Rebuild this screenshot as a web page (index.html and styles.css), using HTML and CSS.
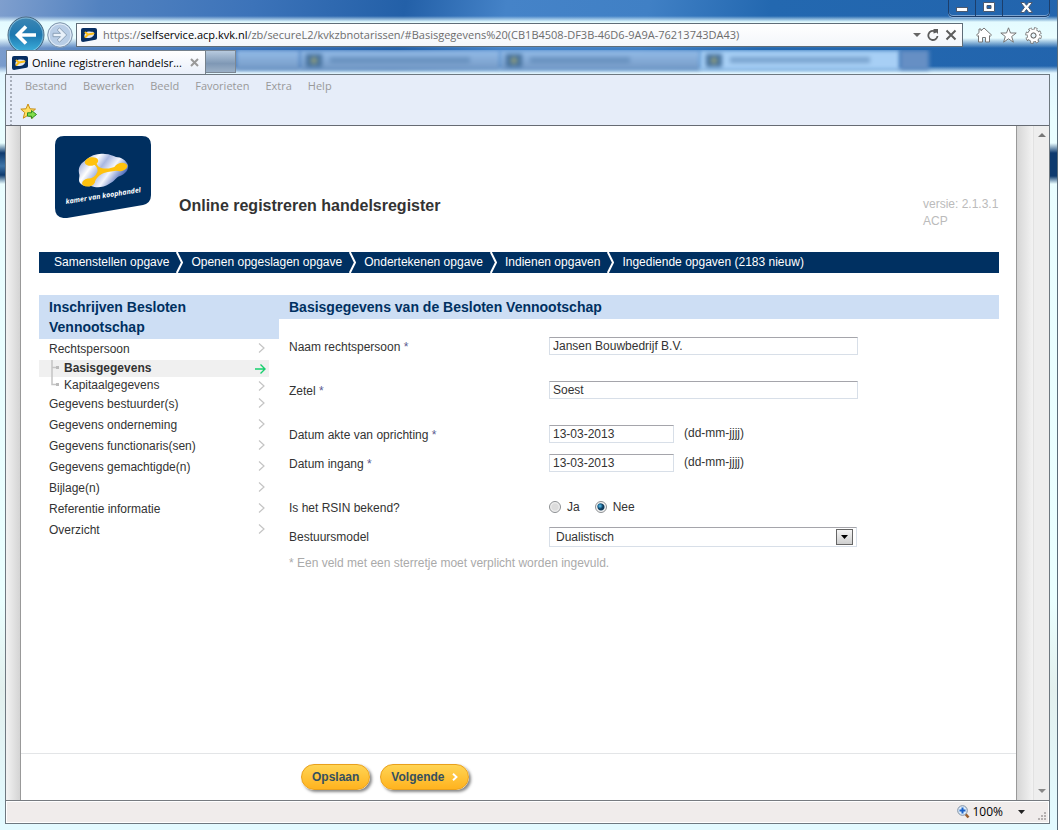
FILE: index.html
```html
<!DOCTYPE html>
<html lang="nl">
<head>
<meta charset="utf-8">
<title>Online registreren handelsregister</title>
<link rel="stylesheet" href="styles.css">
</head>
<body>
<svg class="defs" aria-hidden="true">
  <defs>
    <linearGradient id="blob" x1="0" y1="0" x2="1" y2="0.5">
      <stop offset="0" stop-color="#6f85c8"/><stop offset="0.35" stop-color="#fff"/><stop offset="0.52" stop-color="#a9b8e2"/><stop offset="0.72" stop-color="#f4f6fd"/><stop offset="1" stop-color="#3e5fb4"/>
    </linearGradient>
    <linearGradient id="backfill" x1="0" y1="0" x2="0" y2="1">
      <stop offset="0" stop-color="#3e87b4"/><stop offset="0.5" stop-color="#1d78b0"/><stop offset="1" stop-color="#3fb4e0"/>
    </linearGradient>
    <symbol id="favicon" viewBox="0 0 16 14">
      <path d="M2 0h12q2 0 2 2v8q0 1.500-1.500 1.800L2 14q-2 0-2-2V2q0-2 2-2z" fill="#062e62"/>
      <path d="M3.500 8.500C3 5 6 3 9 3.500s4 0 4 2.500-3 4-6 4-3-.5-3.500-1.500z" fill="#dfe6f6"/>
      <path d="M4.500 4.500 7 6.500 4.500 9M7 6.500l5.500-1" stroke="#fbbd17" stroke-width="2" fill="none" stroke-linecap="round"/>
    </symbol>
    <symbol id="chev" viewBox="0 0 8 10"><path d="M1 .5 6 5 1 9.500" fill="none" stroke="#c4c4c4" stroke-width="1.200"/></symbol>
    <symbol id="step" viewBox="0 0 7 21"><path d="M.8 0 6 10.500.8 21" fill="none" stroke="#fff" stroke-width="2"/></symbol>
  </defs>
</svg>
<div class="window">
  <header class="titlebar">
    <div class="controls">
      <button aria-label="Minimaliseren"><svg width="12" height="5"><rect x=".5" y=".5" width="11" height="4" fill="#fff" stroke="#4c5a70"/></svg></button>
      <button aria-label="Maximaliseren"><svg width="12" height="10"><path d="M.5.500h11v9H.500zM4 3.500v3h4v-3z" fill="#fff" fill-rule="evenodd" stroke="#4c5a70"/></svg></button>
      <button class="close" aria-label="Sluiten"><svg width="13" height="11" viewBox="0 0 13 11"><path d="M.7.500h3.600l2.200 2.800L8.700.500h3.600L8.600 5.300l3.900 5.200H8.800L6.500 7.400l-2.300 3.100H.500l3.900-5.200z" fill="#fff" stroke="#4c5a70"/></svg></button>
    </div>
  </header>

  <div class="navrow">
    <button class="back" aria-label="Vorige"><svg width="38" height="38" viewBox="0 0 38 38"><circle cx="19" cy="19" r="18" fill="url(#backfill)" stroke="#49657d"/><circle cx="19" cy="19" r="17" fill="none" stroke="#b3dcee" stroke-opacity=".6"/><path d="M29 19H11M19 10.500 10.500 19l8.500 8.500" fill="none" stroke="#fff" stroke-width="3.600"/></svg></button>
    <button class="forward" aria-label="Volgende pagina"><svg width="26" height="26" viewBox="0 0 26 26"><circle cx="13" cy="13" r="12.300" fill="#b8cde6" stroke="#8095aa"/><circle cx="13" cy="13" r="11" fill="none" stroke="#e4eef8"/><path d="M6 11.300h7.500L10.200 8l2.300-2.200L19.700 13l-7.200 7.200-2.300-2.200 3.300-3.300H6z" fill="#e9f1fa" stroke="#8ba0b7"/></svg></button>
    <div class="address">
      <svg width="16" height="14"><use href="#favicon"/></svg>
      <div class="url" role="textbox" aria-label="Adres" contenteditable="true" spellcheck="false">https://<b>selfservice.acp.kvk.nl</b>/zb/secureL2/kvkzbnotarissen/#Basisgegevens%20(CB1B4508-DF3B-46D6-9A9A-76213743DA43)</div>
      <button aria-label="Adreslijst"><svg width="8" height="4"><path d="M0 0h8L4 4z" fill="#666"/></svg></button>
      <button aria-label="Vernieuwen"><svg width="12" height="12" viewBox="0 0 12 12"><path d="M10.500 7A4.600 4.600 0 1 1 8 2.300" fill="none" stroke="#5c5c5c" stroke-width="1.800"/><path d="M6.500 0H11v5L9.500 3.500 6.500 4.500z" fill="#5c5c5c"/></svg></button>
      <button aria-label="Stoppen"><svg width="12" height="12" viewBox="0 0 12 12"><path d="m1.500 1.500 9 9m0-9-9 9" stroke="#5c5c5c" stroke-width="2"/></svg></button>
    </div>
    <div class="tools">
      <button aria-label="Startpagina"><svg width="16" height="16" viewBox="0 0 16 16"><path d="M8 1 15.500 8l-1.300 1.200-.7-.5V15H9.500v-4.500h-3V15h-4V8.700l-.7.500L.5 8 3 5.700V2h2v1.800z" fill="#fff" stroke="#777"/></svg></button>
      <button aria-label="Favorieten"><svg width="17" height="16" viewBox="0 0 17 16"><path d="m8.500.8 2 5.200h5.700l-4.500 3.500 1.700 5.700-4.900-3.400-4.900 3.400 1.700-5.700L.8 6h5.700z" fill="#fff" stroke="#777"/></svg></button>
      <button aria-label="Extra"><svg width="17" height="17" viewBox="0 0 17 17"><circle cx="8.500" cy="8.500" r="6.500" fill="none" stroke="#777" stroke-width="3.600" stroke-dasharray="3.100 2" stroke-dashoffset=".3"/><circle cx="8.500" cy="8.500" r="4.500" fill="none" stroke="#777" stroke-width="4.500"/><circle cx="8.500" cy="8.500" r="6.300" fill="none" stroke="#fff" stroke-width="2.400" stroke-dasharray="1.800 3.150" stroke-dashoffset="-.4"/><circle cx="8.500" cy="8.500" r="4.400" fill="none" stroke="#fff" stroke-width="3"/><circle cx="8.500" cy="8.500" r="2.400" fill="#e7f6fd" stroke="#777"/></svg></button>
    </div>
  </div>

  <div class="tabs">
    <div class="tab">
      <svg width="16" height="14"><use href="#favicon"/></svg>
      <span>Online registreren handelsr...</span>
      <button aria-label="Tabblad sluiten"><svg width="9" height="9" viewBox="0 0 9 9"><path d="m1 1 7 7m0-7L1 8" stroke="#999" stroke-width="2"/></svg></button>
    </div>
    <button class="newtab" aria-label="Nieuw tabblad"></button>
    <div class="ghosts" aria-hidden="true">
      <i class="ghost first"></i>
      <i class="ghost"><em></em><u></u></i>
      <i class="ghost"><em></em><u class="short"></u></i>
      <i class="ghost lit"><em></em><u></u></i>
      <i class="ghost last"></i>
    </div>
  </div>

  <div class="client">
    <div class="toolbar">
      <nav class="menu">
        <button>Bestand</button><button>Bewerken</button><button>Beeld</button><button>Favorieten</button><button>Extra</button><button>Help</button>
      </nav>
      <button class="addfav" aria-label="Toevoegen aan favorieten"><svg width="18" height="17" viewBox="0 0 18 17"><path d="m8 1 2 4.800 5.500.3-4.200 3.500 1.400 5.600L8 12.200l-4.700 3 1.400-5.600L.8 6.100 6 5.800z" fill="#ffdf62" stroke="#c98e16"/><path d="M7.500 9.800h4V7.500l5 4-5 4v-2.300h-4z" fill="#82dd4c" stroke="#2e8d23"/></svg></button>
    </div>

    <div class="viewport">
      <div class="page">
        <div class="brand">
          <svg class="logo" width="96" height="82" viewBox="0 0 96 82" role="img" aria-label="kamer van koophandel">
            <path d="M9 0h78q9 0 9 9v50q0 8-8 10L12 82Q0 83 0 72V9Q0 0 9 0z" fill="#002f60"/>
            <path d="M24 37c-1-6 2-10 7-13 5-5 12-7 19-6 5 0 8 2 11 3 5 0 10 3 12 8 1 5-3 9-8 11-4 1-5 5-11 8-6 4-13 4-18 2-7 1-12-2-12-6 0-3 1-4 0-7z" fill="url(#blob)"/>
            <g fill="#ffc20e">
              <ellipse cx="36.500" cy="25.500" rx="6.800" ry="4.200" transform="rotate(-10 36.500 25.500)"/>
              <ellipse cx="66" cy="31" rx="6.500" ry="4" transform="rotate(-14 66 31)"/>
              <ellipse cx="33.500" cy="46.500" rx="6.500" ry="4" transform="rotate(-10 33.500 46.500)"/>
              <path d="M41 25c1 5 3 7 8 7.500 5 .3 9-.5 13-3l1 5c-5 1-9 .8-14 2.500-5 2-8 5-9.500 10L34 43c6-2 7-4 8.500-7.500.5-3-1-5-3.500-7z"/>
            </g>
            <text class="logotext" x="11" y="68" transform="rotate(-9 11 68)">kamer van koophandel</text>
          </svg>
          <h1>Online registreren handelsregister</h1>
          <p class="version">versie: 2.1.3.1<br>ACP</p>
        </div>

        <nav class="steps">
          <a href="#">Samenstellen opgave</a><svg width="7" height="21"><use href="#step"/></svg>
          <a href="#">Openen opgeslagen opgave</a><svg width="7" height="21"><use href="#step"/></svg>
          <a href="#">Ondertekenen opgave</a><svg width="7" height="21"><use href="#step"/></svg>
          <a href="#">Indienen opgaven</a><svg width="7" height="21"><use href="#step"/></svg>
          <a href="#">Ingediende opgaven (2183 nieuw)</a>
        </nav>

        <div class="columns">
          <aside class="side">
            <h2>Inschrijven Besloten Vennootschap</h2>
            <ul>
              <li><a href="#">Rechtspersoon<svg width="8" height="10"><use href="#chev"/></svg></a></li>
              <li class="sub active"><svg class="branch" width="9" height="17"><path d="M1 0v17M1 7.500h4" stroke="#c4c4c4" fill="none" stroke-width="1.500"/><rect x="5" y="6" width="3" height="3" fill="#bbb"/></svg><a href="#">Basisgegevens<svg width="11" height="10" viewBox="0 0 11 10"><path d="M0 5h10M5.500.5 10 5l-4.500 4.500" fill="none" stroke="#16cf6d" stroke-width="1.400"/></svg></a></li>
              <li class="sub"><svg class="branch" width="9" height="17"><path d="M1 0v7.500h4" stroke="#c4c4c4" fill="none" stroke-width="1.500"/><rect x="5" y="6" width="3" height="3" fill="#bbb"/></svg><a href="#">Kapitaalgegevens<svg width="8" height="10"><use href="#chev"/></svg></a></li>
              <li><a href="#">Gegevens bestuurder(s)<svg width="8" height="10"><use href="#chev"/></svg></a></li>
              <li><a href="#">Gegevens onderneming<svg width="8" height="10"><use href="#chev"/></svg></a></li>
              <li><a href="#">Gegevens functionaris(sen)<svg width="8" height="10"><use href="#chev"/></svg></a></li>
              <li><a href="#">Gegevens gemachtigde(n)<svg width="8" height="10"><use href="#chev"/></svg></a></li>
              <li><a href="#">Bijlage(n)<svg width="8" height="10"><use href="#chev"/></svg></a></li>
              <li><a href="#">Referentie informatie<svg width="8" height="10"><use href="#chev"/></svg></a></li>
              <li><a href="#">Overzicht<svg width="8" height="10"><use href="#chev"/></svg></a></li>
            </ul>
          </aside>

          <main class="content">
            <h2>Basisgegevens van de Besloten Vennootschap</h2>
            <form id="basis" class="form">
              <div class="row spaced"><label for="naam">Naam rechtspersoon <span class="star">*</span></label><input class="text" id="naam" type="text" value="Jansen Bouwbedrijf B.V."></div>
              <div class="row spaced"><label for="zetel">Zetel <span class="star">*</span></label><input class="text" id="zetel" type="text" value="Soest"></div>
              <div class="row"><label for="akte">Datum akte van oprichting <span class="star">*</span></label><input class="text date" id="akte" type="text" value="13-03-2013"><span class="hint">(dd-mm-jjjj)</span></div>
              <div class="row spaced"><label for="ingang">Datum ingang <span class="star">*</span></label><input class="text date" id="ingang" type="text" value="13-03-2013"><span class="hint">(dd-mm-jjjj)</span></div>
              <div class="row" role="radiogroup" aria-labelledby="rsin"><span class="caption" id="rsin">Is het RSIN bekend?</span>
                <span class="option"><input type="radio" name="rsin" id="ja"><label for="ja">Ja</label></span>
                <span class="option"><input type="radio" name="rsin" id="nee" checked><label for="nee">Nee</label></span>
              </div>
              <div class="row"><label for="model">Bestuursmodel</label>
                <span class="select"><select id="model"><option>Dualistisch</option></select><span class="drop"><svg width="7" height="4"><path d="M0 0h7L3.500 4z"/></svg></span></span>
              </div>
              <p class="note">* Een veld met een sterretje moet verplicht worden ingevuld.</p>
            </form>
          </main>
        </div>

        <footer class="actions">
          <button form="basis" type="button">Opslaan</button>
          <button form="basis" type="button">Volgende<svg width="6" height="8" viewBox="0 0 6 8"><path d="m1 .7 3.500 3.300L1 7.300" fill="none" stroke="#fff" stroke-width="1.900"/></svg></button>
        </footer>
      </div>
      <div class="scrollbar" aria-hidden="true">
        <svg width="8" height="4"><path d="M0 4h8L4 0z" fill="#777"/></svg>
        <svg width="8" height="4"><path d="M0 0h8L4 4z" fill="#888"/></svg>
      </div>
    </div>

    <div class="status">
      <button class="zoom"><svg width="13" height="14" viewBox="0 0 13 14"><path d="m8.500 9 3 3.500" stroke="#9b5f2c" stroke-width="2.600"/><circle cx="5.500" cy="5.500" r="4.800" fill="#dcecfa" stroke="#7e8fa3"/><path d="M5.500 2.500v6M2.500 5.500h6" stroke="#1c62c8" stroke-width="2"/></svg>100%<svg width="7" height="4"><path d="M0 0h7L3.500 4z" fill="#222"/></svg></button>
      <svg class="grip" width="9" height="9" fill="#b5b0b0"><path d="M6 0h2v2H6zM3 3h2v2H3zM6 3h2v2H6zM0 6h2v2H0zM3 6h2v2H3zM6 6h2v2H6z"/></svg>
    </div>
  </div>
</div>
</body>
</html>
```
FILE: styles.css
```css
* { box-sizing: border-box; }
body { margin: 0; font: 12px/14px "Liberation Sans", Arial, sans-serif; color: #333; }
button { margin: 0; padding: 0; border: 0; background: none; font: inherit; color: inherit; display: flex; align-items: center; }
h1, h2, p, ul { margin: 0; padding: 0; }
ul { list-style: none; }
a { color: inherit; text-decoration: none; }
svg { display: block; flex: none; }
.defs { position: absolute; width: 0; height: 0; }

.window {
  min-height: 100vh;
  display: flex;
  flex-direction: column;
  padding: 0 7px 6px 5px;
  border-right: 1px solid #5a6b78;
  background:
    linear-gradient(to bottom, transparent 140px, #e8ffff 143px, #0e3a6e 153px, #3f75a8 166px, #0e3a6e 175px, transparent 184px) left / 6px 100% no-repeat,
    linear-gradient(to bottom, transparent 143px, #0e3a6e 153px, #0e3a6e 176px, transparent 184px) right / 7px 100% no-repeat,
    linear-gradient(to bottom, transparent 16px, #e4fbff 22px, #e9fdff 38px, transparent 48px, transparent 66px, #e2f6ff 73px, #e9fdff 120px, #eaffff 600px, #e3f0ee 690px, #e3faff 820px),
    linear-gradient(100deg, #7f9fce 0, #5282c0 100px, #3c73b9 250px, #2360a8 400px, #4583c8 500px, #4080c5 640px, #2368b0 760px, #2263ac 100%);
}

.titlebar { height: 22px; display: flex; justify-content: flex-end; align-items: flex-start; }
.controls { display: flex; border: 1px solid #1c3e6b; border-top: 0; border-radius: 0 0 5px 5px; box-shadow: inset 0 -1px 0 #7ba3cf, 0 1px 0 #8fb5dd; }
.controls button { width: 27px; height: 16px; padding-bottom: 2px; justify-content: center; border-right: 1px solid #1c3e6b; }
.controls button:first-child { padding-top: 4px; }
.controls .close { width: 46px; border-right: 0; }

.navrow { height: 28px; display: flex; align-items: center; padding: 0 8px 2px 2px; font-family: "Open Sans", "Noto Sans", sans-serif; font-size: 11px; }
.back { margin: -8px 0; }
.forward { margin: 0 3px 0 2px; }
.address { flex: 1; min-width: 0; height: 24px; display: flex; align-items: center; gap: 6px; padding: 0 5px 0 4px; border: 1px solid #5f6d78; background: linear-gradient(#fff, #f3f6fa); }
.url { flex: 1; min-width: 0; overflow: hidden; white-space: nowrap; line-height: 18px; color: #6d6d6d; outline: 0; }
.url b { font-weight: 400; color: #000; }
.tools { display: flex; gap: 8px; margin-left: 13px; }

.tabs { height: 24px; display: flex; font-family: "Open Sans", "Noto Sans", sans-serif; font-size: 11px; }
.tab { width: 200px; margin-left: 1px; display: flex; align-items: center; gap: 4px; padding: 0 6px 0 5px; border: 1px solid #75818c; border-bottom: 0; background: linear-gradient(#fff, #e9effa); color: #000; white-space: nowrap; z-index: 1; }
.tab span { flex: 1; }
.newtab { width: 30px; height: 23px; border: 1px solid #7b8794; border-left: 0; background: linear-gradient(#b7cade, #7f98b5 60%, #9cb0c6); }
.ghosts { flex: 1; min-width: 0; display: flex; overflow: hidden; padding-right: 120px; }
.ghost { width: 200px; flex: 0 1 auto; height: 20px; display: flex; align-items: center; gap: 8px; padding-left: 6px; background: linear-gradient(#95bde9, #7398c4); filter: blur(2px); }
.ghost.first { width: 64px; }
.ghost.lit { background: #a7cff5; }
.ghost.last { width: 29px; background: #668fc4; }
.ghost em { width: 16px; height: 13px; background: radial-gradient(circle, #8a9a80 2px, #44709e 5px); }
.ghost u { width: 140px; height: 6px; background: #4d79a9; opacity: .5; }
.ghost u.short { width: 100px; }

.client { flex: 1; display: flex; flex-direction: column; border: 1px solid #6e7880; background: #fff; }
.toolbar { height: 51px; padding: 3px 0 0 14px; border-bottom: 1px solid #666b73; background: radial-gradient(circle, #a8afbb 1px, transparent 1px) 3px 0 / 4px 4px repeat-y, #e6edf9; font-family: "Open Sans", "Noto Sans", sans-serif; font-size: 11px; color: #999; }
.menu { display: flex; gap: 16px; padding-left: 5px; height: 16px; }
.addfav { margin-top: 9px; }

.viewport { flex: 1; display: flex; background: #fff; }
.page { flex: 1; min-width: 0; display: flex; flex-direction: column; border-left: 15px solid; border-right: 17px solid; border-image: linear-gradient(to right, #f3f3f3, #d4d4d4 14px, #999 14px, #999 15px, #fff 15px, #fff calc(100% - 17px), #999 calc(100% - 17px), #999 calc(100% - 16px), #d6d6d6 calc(100% - 16px), #f3f3f3) 0 17 0 15; }
.scrollbar { width: 16px; display: flex; flex-direction: column; justify-content: space-between; align-items: center; padding: 7px 0; background: #eee; border-left: 1px solid #e2e2e2; }

.brand { display: flex; align-items: flex-start; padding: 10px 17px 0 34px; }
.logo { margin-right: 28px; }
.logotext { font: italic bold 7px "Open Sans", "Noto Sans", sans-serif; fill: #fff; }
h1 { flex: 1; padding-top: 60px; font-size: 16px; line-height: 20px; }
.version { width: 76px; padding-top: 60px; line-height: 17px; color: #bbb; }

.steps { display: flex; flex-wrap: wrap; gap: 0 7px; margin: 22px 17px 22px 18px; padding-left: 15px; background: #003061; color: #fff; line-height: 20px; }
.steps svg { margin-right: 1px; }

.columns { flex: 1; display: flex; align-items: flex-start; margin: 0 17px 0 18px; }
h2 { padding: 2px 10px; background: #cddef4; color: #003061; font-size: 14px; line-height: 20px; }
.side { width: 240px; flex: none; }
.side li { height: 21px; display: flex; margin-right: 10px; padding-left: 10px; line-height: 21px; }
.side a { flex: 1; display: flex; justify-content: space-between; padding-right: 3px; }
.side a svg { margin-top: 4px; }
.side .sub { height: 17px; line-height: 16px; }
.side .active { font-weight: 700; background: #f0f0f0; }
.branch { margin: 0 4px 0 2px; }

.content { flex: 1; min-width: 0; }
.form { padding: 18px 0 0 10px; }
.row { display: flex; align-items: flex-start; min-height: 20px; margin-bottom: 9px; }
.row.spaced { margin-bottom: 24px; }
.row > label, .caption { width: 260px; flex: none; line-height: 20px; }
.star { color: #5a5a90; }
.text { width: 309px; height: 18px; padding: 0 3px; border: 1px solid #d8dfe8; border-top-color: #a5a5ab; border-radius: 0; background: #fff; font: inherit; line-height: 16px; color: #333; }
.date { width: 125px; }
.hint { margin-left: 10px; line-height: 17px; }
.option { display: flex; align-items: center; gap: 6px; margin-right: 15px; line-height: 18px; }
.option input { appearance: none; width: 12px; height: 12px; margin: 0; border: 1px solid #8c8f92; border-radius: 50%; background: radial-gradient(circle, #dcdcdc 0 3px, #f6f6f6 5px); }
.option input:checked { background: radial-gradient(circle at 4px 4px, #6fc9ee 0, #1b6a98 2px, transparent 3px), radial-gradient(circle, #123c5c 3px, #f4f4f4 4px); }
.select { position: relative; width: 308px; }
select { appearance: none; width: 100%; height: 20px; padding: 0 6px; border: 1px solid #d8dfe8; border-top-color: #a5a5ab; border-radius: 0; background: #fff; font: inherit; color: #333; }
.drop { position: absolute; top: 2px; right: 4px; width: 17px; height: 16px; display: flex; align-items: center; justify-content: center; border: 1px solid #666; background: linear-gradient(#f5f5f5, #cfcfcf); pointer-events: none; }
.note { color: #aaa; }

.actions { display: flex; gap: 10px; padding: 10px 0 10px 280px; border-top: 1px solid #e3e5e7; }
.actions button { height: 26px; gap: 8px; padding: 0 10px 1px; border: 1px solid #e9a01c; border-radius: 13px; background: linear-gradient(#ffd454, #ffb31f); box-shadow: 2px 2px 3px #888; font-weight: 700; color: #35505f; }

.status { height: 23px; display: flex; align-items: center; justify-content: flex-end; gap: 13px; border-top: 1px solid #777b80; background: #f0eceb; font-family: "Open Sans", "Noto Sans", sans-serif; color: #000; box-shadow: inset 0 0 0 1px #fff; }
.zoom { gap: 2px; }
.zoom svg:last-child { margin-left: 13px; }
.grip { align-self: flex-end; margin: 0 2px 2px 0; }
```
